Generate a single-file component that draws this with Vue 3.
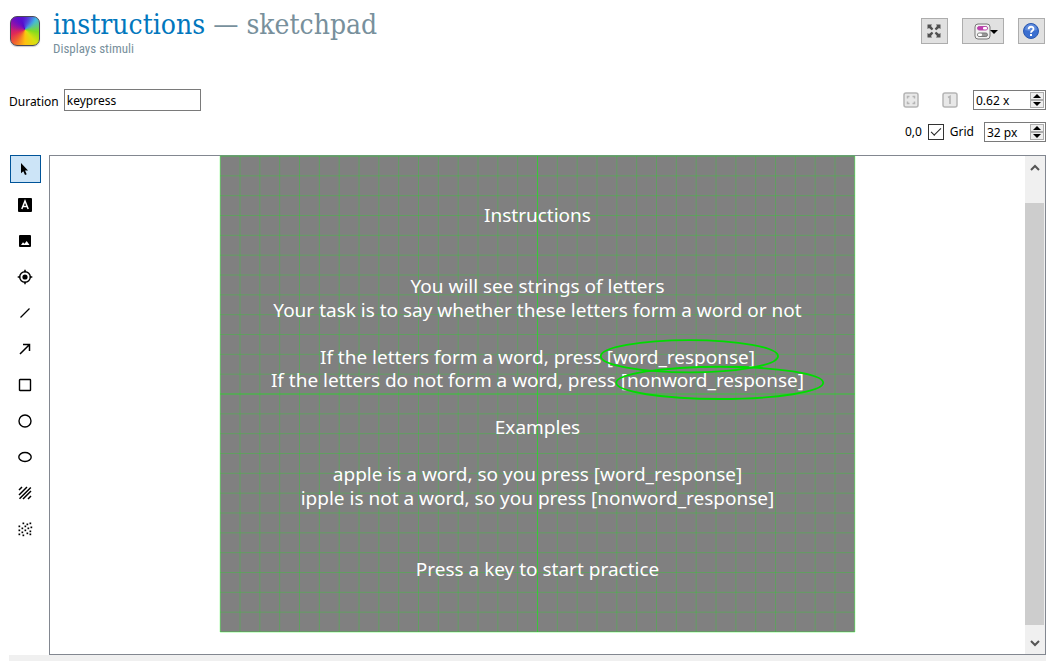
<script setup>
import { ref } from 'vue'

const duration = ref('keypress')
const zoom = ref('0.62 x')
const gridSize = ref('32 px')
const showGrid = ref(true)
const activeTool = ref('Select')

const tools = [
  'Select', 'Text line', 'Image', 'Fixation dot', 'Line', 'Arrow',
  'Rectangle', 'Circle', 'Ellipse', 'Gabor patch', 'Noise patch',
]

const verticals = []
for (let x = -480; x < 512; x += 32) verticals.push(x)
const horizontals = []
for (let y = -352; y < 384; y += 32) horizontals.push(y)

const lines = [
  { row: -7, text: 'Instructions' },
  { row: -4, text: 'You will see strings of letters' },
  { row: -3, text: 'Your task is to say whether these letters form a word or not' },
  { row: -1, text: 'If the letters form a word, press [word_response]' },
  { row: 0, text: 'If the letters do not form a word, press [nonword_response]' },
  { row: 2, text: 'Examples' },
  { row: 4, text: 'apple is a word, so you press [word_response]' },
  { row: 5, text: 'ipple is not a word, so you press [nonword_response]' },
  { row: 8, text: 'Press a key to start practice' },
]

const noise = [
  [5, 1], [12, 1], [9, 2], [1, 4], [7, 4], [4, 6], [10, 6], [13, 5], [1, 8],
  [7, 8], [12, 9], [4, 10], [9, 11], [1, 12], [12, 12], [5, 13],
]
</script>

<template>
  <div class="page">
    <header class="header">
      <div class="logo"></div>
      <div class="titles">
        <h1><span class="name">instructions</span> — sketchpad</h1>
        <p>Displays stimuli</p>
      </div>
      <div class="actions">
        <button type="button" class="action" aria-label="Toggle pop-out">
          <svg width="14" height="14" viewBox="0 0 14 14" fill="#505050">
            <path d="M.5 .5h4.500L4 2l2.300 2.800-1.500 1.500L2 4 .5 5zM13.500 .5V5L12 4 9.200 6.300 7.700 4.800 10 2 9 .5zM.5 13.500V9L2 10l2.800-2.300 1.500 1.500L4 12l1 1.500zM13.500 13.500H9l1-1.500-2.300-2.800 1.500-1.500L12 10l1.500-1z" />
          </svg>
        </button>
        <button type="button" class="action wide" aria-label="View">
          <svg width="27" height="17" viewBox="0 0 27 17">
            <rect x="1" y="1" width="15" height="15" rx="3" fill="#f2f2f2" stroke="#777" />
            <rect x="3.500" y="3.500" width="10" height="3.500" rx="1.700" fill="#c13bb0" stroke="#b44aa7" />
            <rect x="9" y="4" width="4" height="2.500" rx="1" fill="#fff" />
            <rect x="3.500" y="10" width="10" height="3.500" rx="1.700" fill="#999" stroke="#777" />
            <rect x="4" y="10.500" width="4" height="2.500" rx="1" fill="#fff" />
            <path d="M16 7h8l-4 4z" />
          </svg>
        </button>
        <button type="button" class="action" aria-label="Help">
          <svg width="16" height="16" viewBox="0 0 16 16">
            <circle cx="8" cy="8" r="7.500" fill="#3b6fd0" stroke="#2a58b0" />
            <path d="M2 7a6 6 0 0 1 12 0q-6 2-12 0z" fill="#5f8bdc" />
            <path d="M5.600 6.200C5.700 3 10.500 3 10.500 5.900C10.500 7.700 8 7.700 8 9.700" fill="none" stroke="#fff" stroke-width="1.800" />
            <rect x="7" y="11" width="2" height="2" fill="#fff" />
          </svg>
        </button>
      </div>
    </header>

    <section class="settings">
      <div class="duration">
        <label for="duration">Duration</label>
        <input id="duration" v-model="duration" type="text" />
      </div>
      <div class="view">
        <div class="row">
          <button type="button" class="mini" aria-label="Zoom to fit">
            <svg width="16" height="16" viewBox="0 0 16 16" fill="none" stroke="#b5b5b5">
              <rect x="1" y="1" width="14" height="14" rx="2" fill="#e8e8e8" stroke-width="1.500" />
              <path d="M4.500 6.500v-2h2M9.500 4.500h2v2M11.500 9.500v2h-2M6.500 11.500h-2v-2" stroke-width="1.500" />
            </svg>
          </button>
          <button type="button" class="mini" aria-label="Zoom to 100%">
            <svg width="16" height="16" viewBox="0 0 16 16" fill="none" stroke="#b5b5b5">
              <rect x="1" y="1" width="14" height="14" rx="2" fill="#e8e8e8" stroke-width="1.500" />
              <path d="M6 5.500L8 4.500V12" stroke-width="1.700" />
            </svg>
          </button>
          <div class="spin">
            <input v-model="zoom" type="text" aria-label="Zoom" />
            <div class="steps">
              <button type="button" aria-label="Zoom in"><svg width="8" height="4"><path d="M0 4L4 0L8 4z" /></svg></button>
              <button type="button" aria-label="Zoom out"><svg width="8" height="4"><path d="M0 0L4 4L8 0z" /></svg></button>
            </div>
          </div>
        </div>
        <div class="row">
          <span class="coords">0,0</span>
          <label class="check">
            <input v-model="showGrid" type="checkbox" />
            Grid
          </label>
          <div class="spin small">
            <input v-model="gridSize" type="text" aria-label="Grid size" />
            <div class="steps">
              <button type="button" aria-label="Larger grid"><svg width="8" height="4"><path d="M0 4L4 0L8 4z" /></svg></button>
              <button type="button" aria-label="Smaller grid"><svg width="8" height="4"><path d="M0 0L4 4L8 0z" /></svg></button>
            </div>
          </div>
        </div>
      </div>
    </section>

    <main class="editor">
      <nav class="tools" aria-label="Drawing tools">
        <button
          v-for="tool in tools"
          :key="tool"
          type="button"
          :class="{ active: tool === activeTool }"
          :aria-label="tool"
          @click="activeTool = tool"
        >
          <svg width="14" height="14" viewBox="0 0 14 14" fill="none" stroke="#000" overflow="visible">
            <path v-if="tool === 'Select'" d="M3 1v10.200l2.300-2 1.700 3.800 1.700-.8-1.700-3.600h3z" fill="#000" stroke="none" />
            <g v-else-if="tool === 'Text line'">
              <rect width="14" height="14" rx="1" fill="#000" stroke="none" />
              <path d="M3.800 11L7 3l3.200 8M5 8.500h4" stroke="#fff" stroke-width="1.500" />
            </g>
            <path v-else-if="tool === 'Image'" d="M2 1h10q1 0 1 1v10q0 1-1 1H2q-1 0-1-1V2q0-1 1-1zM3 11h8.500L8.700 7 6.500 9.800 5 8.200z" fill="#000" fill-rule="evenodd" stroke="none" />
            <g v-else-if="tool === 'Fixation dot'">
              <circle cx="7" cy="7" r="5.300" stroke-width="1.400" />
              <circle cx="7" cy="7" r="2.600" fill="#000" stroke="none" />
              <path d="M7-.3v2.500M7 11.800v2.500M-.3 7h2.500M11.800 7h2.500" stroke-width="1.500" />
            </g>
            <path v-else-if="tool === 'Line'" d="M2.500 11.500l9-9" stroke-width="1.300" />
            <path v-else-if="tool === 'Arrow'" d="M2 12l9.300-9.300M5 2.500h6.500V9" stroke-width="1.500" />
            <rect v-else-if="tool === 'Rectangle'" x="1.500" y="1.500" width="11" height="11" rx=".5" stroke-width="1.400" />
            <circle v-else-if="tool === 'Circle'" cx="7" cy="7" r="6" stroke-width="1.400" />
            <ellipse v-else-if="tool === 'Ellipse'" cx="7" cy="7" rx="6.200" ry="4.500" stroke-width="1.400" />
            <path v-else-if="tool === 'Gabor patch'" d="M1 4l3-3M1 9l8-8M1.500 12.800L12.800 1.500M5 13l8-8M10 13l3-3" stroke-width="1.500" />
            <g v-else fill="#000" stroke="none">
              <rect v-for="(p, i) in noise" :key="i" :x="p[0] - .5" :y="p[1] - .5" width="1.700" height="1.700" />
            </g>
          </svg>
        </button>
      </nav>

      <div class="canvas">
        <div class="viewport">
          <svg class="sketch" viewBox="-512 -384 1024 768">
            <rect x="-512" y="-384" width="1024" height="768" fill="#808080" />
            <g v-if="showGrid" class="grid">
              <path v-for="x in verticals" :key="'v' + x" :d="`M${x} -384V384`" />
              <path v-for="y in horizontals" :key="'h' + y" :d="`M-512 ${y}H512`" />
              <path class="axis" d="M0 -384V384M-512 0H512M-512 -384H512V384H-512z" />
            </g>
            <text>
              <tspan v-for="line in lines" :key="line.row" x="0" :y="line.row * 38 - 11">{{ line.text }}</tspan>
            </text>
            <ellipse cx="245" cy="-61" rx="143" ry="26" />
            <ellipse cx="294" cy="-18" rx="167" ry="26" />
          </svg>
        </div>
        <div class="scrollbar">
          <button type="button" aria-label="Scroll up"><svg width="10" height="7" viewBox="0 0 10 7"><path d="M1 6l4-4 4 4" /></svg></button>
          <div class="track"><div class="thumb"></div></div>
          <button type="button" aria-label="Scroll down"><svg width="10" height="7" viewBox="0 0 10 7"><path d="M1 1l4 4 4-4" /></svg></button>
        </div>
      </div>
    </main>
    <div class="splitter"></div>
  </div>
</template>

<style>
body {
  margin: 0;
  background: #fff;
}
</style>

<style scoped>
.page {
  box-sizing: border-box;
  min-height: 100vh;
  display: flex;
  flex-direction: column;
  padding: 8px 10px 3px 9px;
  font: 12px/16px "Noto Sans", "Open Sans", sans-serif;
  color: #000;
}
button {
  display: flex;
  align-items: center;
  justify-content: center;
  padding: 0;
  margin: 0;
  border: 0;
  background: none;
  flex: none;
}
input {
  box-sizing: border-box;
  font: inherit;
  color: inherit;
  margin: 0;
}
.header {
  display: flex;
  align-items: flex-start;
  height: 81px;
}
.logo {
  box-sizing: border-box;
  width: 30px;
  height: 30px;
  margin: 8px 13px 0 1px;
  border: 1px solid #4a4a5a;
  border-radius: 7px;
  background:
    radial-gradient(circle at 35% 0, #5a10d0, transparent 45%),
    conic-gradient(from 0deg at 50% 45%, #5050e0, #40b8e8 45deg, #80dc20 100deg, #d8e010 140deg, #ffc010 180deg, #f06030 220deg, #e02858 250deg, #a010a0 300deg, #5008c8 340deg, #5050e0);
  box-shadow: 0 1px 1px #ccc;
}
.titles {
  flex: 1;
  padding-top: 1px;
}
h1 {
  margin: 0;
  font: 400 28px/32px "Roboto Slab", "DejaVu Serif Condensed", "DejaVu Serif", serif;
  color: #78909c;
}
.name {
  color: #0277bd;
}
.titles p {
  margin: 0;
  font: 13px/16px "Roboto Condensed", Roboto, sans-serif;
  color: #78909c;
}
.actions {
  display: flex;
  gap: 14px;
  padding: 10px 1px 0 0;
}
.action {
  box-sizing: border-box;
  width: 27px;
  height: 26px;
  padding-right: 1px;
  border: 1px solid #adadad;
  background: #e1e1e1;
}
.action.wide {
  width: 42px;
  padding: 0 0 0 8px;
}
.settings {
  display: flex;
  justify-content: space-between;
  height: 66px;
}
.duration {
  display: flex;
  gap: 5px;
  height: 22px;
  line-height: 25px;
}
.duration input {
  width: 137px;
  height: 22px;
  padding: 0 2px;
  border: 1px solid #7a7a7a;
}
.view {
  display: flex;
  flex-direction: column;
  align-items: flex-end;
  gap: 12px;
  padding-top: 1px;
}
.row {
  display: flex;
  align-items: center;
  height: 20px;
}
.mini {
  margin-right: 23px;
}
.mini + .mini {
  margin-right: 15px;
}
.coords {
  margin-right: 6px;
}
.check {
  display: flex;
  align-items: center;
  gap: 6px;
  margin-right: 10px;
}
.check input {
  appearance: none;
  width: 16px;
  height: 16px;
  border: 1px solid #333;
  background: #fff;
}
.check input:checked::before {
  content: "";
  display: block;
  width: 9px;
  height: 4px;
  margin: 3px 0 0 2px;
  border: solid #222;
  border-width: 0 0 1px 1px;
  transform: rotate(-45deg);
}
.spin {
  box-sizing: border-box;
  display: flex;
  align-items: center;
  width: 73px;
  height: 20px;
  border: 1px solid #7a7a7a;
  padding-right: 1px;
}
.spin.small {
  width: 62px;
}
.spin input {
  flex: 1;
  min-width: 0;
  height: 18px;
  border: 0;
  padding: 0 2px;
  background: none;
}
.steps button {
  box-sizing: border-box;
  width: 14px;
  height: 8px;
  border: 1px solid #adadad;
  background: #eee;
}
.steps svg {
  display: block;
}
.editor {
  flex: 1;
  display: flex;
}
.tools {
  display: flex;
  flex-direction: column;
  gap: 8px;
  width: 40px;
}
.tools button {
  box-sizing: border-box;
  width: 31px;
  height: 28px;
  margin-left: 1px;
  padding-right: 1px;
  border: 1px solid transparent;
}
.tools .active {
  border-color: #005499;
  background: #cce4f7;
}
.canvas {
  box-sizing: border-box;
  flex: 1;
  display: flex;
  min-width: 0;
  border: 1px solid #828790;
}
.viewport {
  flex: 1;
  display: flex;
  justify-content: center;
  align-items: flex-start;
  min-width: 0;
  padding-right: 1px;
}
.sketch {
  width: 635px;
  height: 476px;
  overflow: visible;
}
.grid path {
  fill: none;
  stroke: #00ff00;
  stroke-opacity: 0.24;
  stroke-width: 1px;
  vector-effect: non-scaling-stroke;
}
.grid .axis {
  stroke-opacity: 0.4;
}
.sketch text {
  font-family: "Noto Sans", "Open Sans", sans-serif;
  font-size: calc(19px / 0.62);
  fill: #fff;
  text-anchor: middle;
}
.sketch ellipse {
  fill: none;
  stroke: #00dc00;
  stroke-width: 3px;
}
.scrollbar {
  display: flex;
  flex-direction: column;
  width: 20px;
  background: #f0f0f0;
}
.scrollbar button {
  width: 19px;
  height: 22px;
}
.scrollbar path {
  fill: none;
  stroke: #555;
  stroke-width: 2px;
}
.track {
  flex: 1;
  display: flex;
  flex-direction: column;
  padding: 25px 1px 7px 0;
}
.thumb {
  flex: 1;
  background: #cdcdcd;
}
.splitter {
  height: 6px;
  background: #f0f0f0;
}
</style>
